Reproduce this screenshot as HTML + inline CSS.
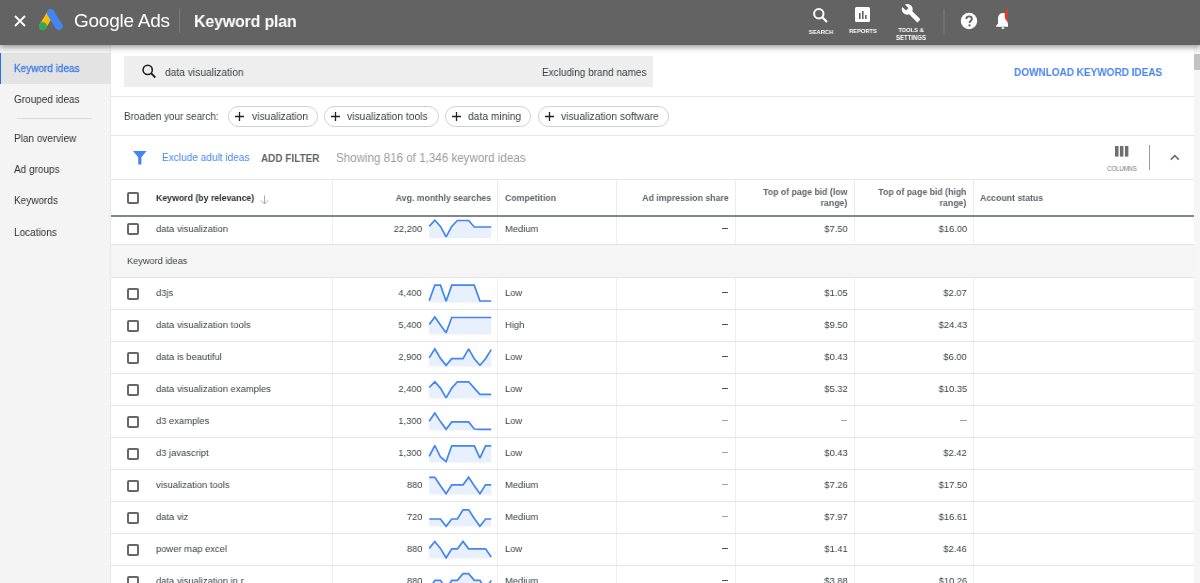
<!DOCTYPE html><html><head><meta charset="utf-8"><title>Keyword plan</title><style>
*{margin:0;padding:0;box-sizing:border-box}
html,body{width:1200px;height:583px;overflow:hidden;background:#fff}
body{position:relative;font-family:"Liberation Sans", sans-serif}
.t{position:absolute;height:20px;line-height:20px;white-space:nowrap;will-change:transform}
.a{position:absolute}
.cb{position:absolute;width:12px;height:12px;border:2px solid #676767;border-radius:2px}
</style></head><body><div class="a" style="left:0;top:0;width:1200px;height:45px;background:#636363;box-shadow:0 2px 6px rgba(0,0,0,.42);z-index:5"></div>
<svg class="a" style="left:13px;top:14px;z-index:6" width="14" height="14" viewBox="0 0 14 14"><path d="M2 2L12 12M12 2L2 12" stroke="#fff" stroke-width="1.8"/></svg>
<svg class="a" style="left:38px;top:9px;z-index:6" width="26" height="24" viewBox="0 0 26 24">
<path d="M12.6 4.1 L4.9 17.25" stroke="#fbbc04" stroke-width="7.3" stroke-linecap="round"/>
<path d="M12.6 4.1 L20.85 17.25" stroke="#4285f4" stroke-width="7.6" stroke-linecap="round"/>
<circle cx="4.9" cy="17.25" r="3.9" fill="#34a853"/>
</svg>
<div class="t" style="left:74px;top:11px;font-size:19px;font-weight:400;color:#fff;letter-spacing:-0.25px;z-index:6;">Google Ads</div>
<div class="a" style="left:179px;top:9px;width:1px;height:24px;background:#7a7a7a;z-index:6"></div>
<div class="t" style="left:194px;top:12.3px;font-size:16.96px;font-weight:700;color:#fff;letter-spacing:-0.2px;z-index:6;transform:scaleX(0.9434);transform-origin:left center;">Keyword plan</div>
<svg class="a" style="left:812px;top:7px;z-index:6" width="17" height="16" viewBox="0 0 17 16"><circle cx="6.8" cy="6.8" r="4.7" fill="none" stroke="#fff" stroke-width="2"/><path d="M10.3 10.3L15 15" stroke="#fff" stroke-width="2.2"/></svg>
<div class="t" style="left:621px;width:400px;text-align:center;top:21.5px;font-size:6.15px;font-weight:700;color:#fff;letter-spacing:0px;z-index:6;transform:scaleX(0.9434);transform-origin:center center;">SEARCH</div>
<svg class="a" style="left:855px;top:7px;z-index:6" width="15" height="15" viewBox="0 0 15 15"><rect x="0" y="0" width="15" height="15" rx="1.5" fill="#fff"/><rect x="4" y="6" width="1.6" height="6" fill="#636363"/><rect x="7" y="4" width="1.6" height="8" fill="#636363"/><rect x="10" y="8" width="1.6" height="4" fill="#636363"/></svg>
<div class="t" style="left:662.5px;width:400px;text-align:center;top:21px;font-size:6.15px;font-weight:700;color:#fff;letter-spacing:0px;z-index:6;transform:scaleX(0.9434);transform-origin:center center;">REPORTS</div>
<svg class="a" style="left:901px;top:3px;z-index:6" width="20" height="20" viewBox="0 0 24 24"><path fill="#fff" d="M22.7 19l-9.1-9.1c.9-2.3.4-5-1.5-6.9-2-2-5-2.4-7.4-1.3L9 6 6 9 1.6 4.7C.4 7.1.9 10.1 2.9 12.1c1.9 1.9 4.6 2.4 6.9 1.5l9.1 9.1c.4.4 1 .4 1.4 0l2.3-2.3c.5-.4.5-1.1.1-1.4z"/></svg>
<div class="t" style="left:711px;width:400px;text-align:center;top:20px;font-size:6.15px;font-weight:700;color:#fff;letter-spacing:0px;z-index:6;transform:scaleX(0.9434);transform-origin:center center;">TOOLS &amp;</div>
<div class="t" style="left:711px;width:400px;text-align:center;top:27.6px;font-size:6.36px;font-weight:700;color:#fff;letter-spacing:0px;z-index:6;transform:scaleX(0.9434);transform-origin:center center;">SETTINGS</div>
<div class="a" style="left:942.5px;top:9px;width:2px;height:25px;background:#707070;z-index:6"></div>
<svg class="a" style="left:960.2px;top:12.4px;z-index:6" width="18" height="18" viewBox="0 0 18 18"><circle cx="9" cy="9" r="8.2" fill="#fff"/><path d="M6.3 7.1c0-1.6 1.2-2.7 2.8-2.7s2.8 1 2.8 2.5c0 1.9-2.3 1.9-2.3 4" fill="none" stroke="#636363" stroke-width="1.9"/><rect x="8.5" y="12.4" width="2" height="2" fill="#636363"/></svg>
<svg class="a" style="left:994px;top:8px;z-index:6" width="14.4" height="24" viewBox="0 0 14.4 24">
<path fill="#fff" d="M8.9 5.0C5.8 5.0 4 7.6 4 10.8V15.8L2.2 17.6V18.8H15.6V17.6L13.8 15.8V10.8C13.8 7.6 12 5.0 8.9 5.0Z"/>
<rect x="7.6" y="19.3" width="2.6" height="1.7" rx=".8" fill="#fff"/>
<circle cx="19.6" cy="7.4" r="9" fill="#d23f31"/>
</svg>
<div class="a" style="left:0;top:45px;width:111px;height:538px;background:#f4f4f4;border-right:1px solid #e9e9e9"></div>
<div class="a" style="left:0;top:53px;width:111px;height:31px;background:#e3e3e3"></div>
<div class="a" style="left:0;top:53px;width:1.2px;height:31px;background:#1a73e8"></div>
<div class="t" style="left:14px;top:58.400000000000006px;font-size:10.6px;font-weight:400;color:#3b7ae9;letter-spacing:0px;-webkit-text-stroke:0.3px #3b7ae9;transform:scaleX(0.9434);transform-origin:left center;">Keyword ideas</div>
<div class="t" style="left:14px;top:89.4px;font-size:10.6px;font-weight:400;color:#303134;letter-spacing:0px;transform:scaleX(0.9434);transform-origin:left center;">Grouped ideas</div>
<div class="a" style="left:17px;top:118px;width:75px;height:1px;background:#dadada"></div>
<div class="t" style="left:14px;top:127.6px;font-size:10.6px;font-weight:400;color:#303134;letter-spacing:0px;transform:scaleX(0.9434);transform-origin:left center;">Plan overview</div>
<div class="t" style="left:14px;top:159.1px;font-size:10.6px;font-weight:400;color:#303134;letter-spacing:0px;transform:scaleX(0.9434);transform-origin:left center;">Ad groups</div>
<div class="t" style="left:14px;top:190px;font-size:10.6px;font-weight:400;color:#303134;letter-spacing:0px;transform:scaleX(0.9434);transform-origin:left center;">Keywords</div>
<div class="t" style="left:14px;top:221.7px;font-size:10.6px;font-weight:400;color:#303134;letter-spacing:0px;transform:scaleX(0.9434);transform-origin:left center;">Locations</div>
<div class="a" style="left:1194px;top:45px;width:6px;height:538px;background:#f6f6f6"></div>
<div class="a" style="left:1194px;top:54px;width:6px;height:16px;background:#c2c2c2"></div>
<div class="a" style="left:124px;top:55.5px;width:529px;height:31.5px;background:#eeeeee"></div>
<svg class="a" style="left:141px;top:63px" width="16" height="16" viewBox="0 0 16 16"><circle cx="6.7" cy="6.9" r="4.6" fill="none" stroke="#202124" stroke-width="1.6"/><path d="M10 10.2L14.3 14.5" stroke="#202124" stroke-width="1.9"/></svg>
<div class="t" style="left:165px;top:62px;font-size:10.87px;font-weight:400;color:#3c4043;letter-spacing:0px;transform:scaleX(0.9434);transform-origin:left center;">data visualization</div>
<div class="t" style="left:541.5px;top:62px;font-size:10.6px;font-weight:400;color:#3c4043;letter-spacing:0px;transform:scaleX(0.9434);transform-origin:left center;">Excluding brand names</div>
<div class="t" style="left:1014px;top:61.8px;font-size:11.4px;font-weight:700;color:#4a86f0;letter-spacing:-0.1px;transform:scaleX(0.888);transform-origin:left center;">DOWNLOAD KEYWORD IDEAS</div>
<div class="a" style="left:111px;top:96px;width:1083px;height:1px;background:#e6e6e6"></div>
<div class="t" style="left:124px;top:106.6px;font-size:10.49px;font-weight:400;color:#3c4043;letter-spacing:0px;transform:scaleX(0.9434);transform-origin:left center;">Broaden your search:</div>
<div class="a" style="left:228.4px;top:105.5px;width:89.20000000000002px;height:21px;border:1px solid #d0d0d0;border-radius:10.5px"></div>
<svg class="a" style="left:235.4px;top:111.5px" width="9" height="9" viewBox="0 0 9 9"><path d="M4.5 0V9M0 4.5H9" stroke="#202124" stroke-width="1.3"/></svg>
<div class="t" style="left:251.6px;top:105.8px;font-size:10.92px;font-weight:400;color:#3c4043;letter-spacing:0px;transform:scaleX(0.9434);transform-origin:left center;">visualization</div>
<div class="a" style="left:323.9px;top:105.5px;width:115.0px;height:21px;border:1px solid #d0d0d0;border-radius:10.5px"></div>
<svg class="a" style="left:330.9px;top:111.5px" width="9" height="9" viewBox="0 0 9 9"><path d="M4.5 0V9M0 4.5H9" stroke="#202124" stroke-width="1.3"/></svg>
<div class="t" style="left:347.09999999999997px;top:105.8px;font-size:10.92px;font-weight:400;color:#3c4043;letter-spacing:0px;transform:scaleX(0.9434);transform-origin:left center;">visualization tools</div>
<div class="a" style="left:445px;top:105.5px;width:86.39999999999998px;height:21px;border:1px solid #d0d0d0;border-radius:10.5px"></div>
<svg class="a" style="left:452px;top:111.5px" width="9" height="9" viewBox="0 0 9 9"><path d="M4.5 0V9M0 4.5H9" stroke="#202124" stroke-width="1.3"/></svg>
<div class="t" style="left:468.2px;top:105.8px;font-size:10.92px;font-weight:400;color:#3c4043;letter-spacing:0px;transform:scaleX(0.9434);transform-origin:left center;">data mining</div>
<div class="a" style="left:538.2px;top:105.5px;width:130.39999999999998px;height:21px;border:1px solid #d0d0d0;border-radius:10.5px"></div>
<svg class="a" style="left:545.2px;top:111.5px" width="9" height="9" viewBox="0 0 9 9"><path d="M4.5 0V9M0 4.5H9" stroke="#202124" stroke-width="1.3"/></svg>
<div class="t" style="left:561.4000000000001px;top:105.8px;font-size:10.92px;font-weight:400;color:#3c4043;letter-spacing:0px;transform:scaleX(0.9434);transform-origin:left center;">visualization software</div>
<div class="a" style="left:111px;top:135px;width:1083px;height:1px;background:#e6e6e6"></div>
<svg class="a" style="left:133px;top:150.5px" width="14" height="14" viewBox="0 0 14 14"><path d="M0 0H13.6L8.4 6.2V13.5H5.2V6.2Z" fill="#4285f4"/></svg>
<div class="t" style="left:161.5px;top:147.4px;font-size:10.71px;font-weight:400;color:#4a86f0;letter-spacing:0px;transform:scaleX(0.9434);transform-origin:left center;">Exclude adult ideas</div>
<div class="t" style="left:261.3px;top:147.9px;font-size:10.9px;font-weight:700;color:#5f6266;letter-spacing:0px;transform:scaleX(0.915);transform-origin:left center;">ADD FILTER</div>
<div class="t" style="left:335.6px;top:147.6px;font-size:12.3px;font-weight:400;color:#9a9a9a;letter-spacing:0px;transform:scaleX(0.9434);transform-origin:left center;">Showing 816 of 1,346 keyword ideas</div>
<svg class="a" style="left:1115.3px;top:146.2px" width="13.4" height="10.6" viewBox="0 0 13.4 10.6"><rect x="0" y="0" width="3.5" height="10.6" fill="#6e6e6e"/><rect x="4.9" y="0" width="3.5" height="10.6" fill="#6e6e6e"/><rect x="9.9" y="0" width="3.5" height="10.6" fill="#6e6e6e"/></svg>
<div class="t" style="left:921.5px;width:400px;text-align:center;top:158.6px;font-size:6.47px;font-weight:400;color:#777;letter-spacing:-0.1px;transform:scaleX(0.9434);transform-origin:center center;">COLUMNS</div>
<div class="a" style="left:1149px;top:145px;width:1px;height:25px;background:#9a9a9a"></div>
<svg class="a" style="left:1169px;top:152px" width="12" height="10" viewBox="0 0 12 10"><path d="M1.8 7.6L5.8 3.6L9.8 7.6" fill="none" stroke="#6a6a6a" stroke-width="1.5"/></svg>
<div class="a" style="left:111px;top:179px;width:1083px;height:1px;background:#e6e6e6"></div>
<div class="a" style="left:332px;top:180px;width:1px;height:35px;background:#ececec"></div>
<div class="a" style="left:497px;top:180px;width:1px;height:35px;background:#ececec"></div>
<div class="a" style="left:616px;top:180px;width:1px;height:35px;background:#ececec"></div>
<div class="a" style="left:735px;top:180px;width:1px;height:35px;background:#ececec"></div>
<div class="a" style="left:854px;top:180px;width:1px;height:35px;background:#ececec"></div>
<div class="a" style="left:973px;top:180px;width:1px;height:35px;background:#ececec"></div>
<div class="a" style="left:111px;top:214.6px;width:1083px;height:2.2px;background:#80868b"></div>
<div class="cb" style="left:127px;top:191.5px"></div>
<div class="t" style="left:155.7px;top:187.5px;font-size:9.28px;font-weight:700;color:#2a2c2f;letter-spacing:0px;transform:scaleX(0.9434);transform-origin:left center;">Keyword (by relevance)</div>
<svg class="a" style="left:260px;top:194.5px" width="9" height="10" viewBox="0 0 9 10"><path d="M4.5 0.5V9M1 5.5L4.5 9L8 5.5" fill="none" stroke="#a9a9a9" stroke-width="1"/></svg>
<div class="t" style="right:709.25px;top:187.5px;font-size:9.28px;font-weight:700;color:#5f6368;letter-spacing:0px;transform:scaleX(0.9434);transform-origin:right center;">Avg. monthly searches</div>
<div class="t" style="left:504.5px;top:187.5px;font-size:9.28px;font-weight:700;color:#5f6368;letter-spacing:0px;transform:scaleX(0.9434);transform-origin:left center;">Competition</div>
<div class="t" style="right:471.70000000000005px;top:187.5px;font-size:9.28px;font-weight:700;color:#5f6368;letter-spacing:0px;transform:scaleX(0.9434);transform-origin:right center;">Ad impression share</div>
<div class="t" style="right:352.70000000000005px;top:181.7px;font-size:9.28px;font-weight:700;color:#5f6368;letter-spacing:0px;transform:scaleX(0.9434);transform-origin:right center;">Top of page bid (low</div>
<div class="t" style="right:352.70000000000005px;top:193.3px;font-size:9.28px;font-weight:700;color:#5f6368;letter-spacing:0px;transform:scaleX(0.9434);transform-origin:right center;">range)</div>
<div class="t" style="right:233.29999999999995px;top:181.7px;font-size:9.28px;font-weight:700;color:#5f6368;letter-spacing:0px;transform:scaleX(0.9434);transform-origin:right center;">Top of page bid (high</div>
<div class="t" style="right:233.29999999999995px;top:193.3px;font-size:9.28px;font-weight:700;color:#5f6368;letter-spacing:0px;transform:scaleX(0.9434);transform-origin:right center;">range)</div>
<div class="t" style="left:980px;top:187.5px;font-size:9.28px;font-weight:700;color:#5f6368;letter-spacing:0px;transform:scaleX(0.9434);transform-origin:left center;">Account status</div>
<div class="a" style="left:332px;top:217px;width:1px;height:27px;background:#efeff1"></div>
<div class="a" style="left:497px;top:217px;width:1px;height:27px;background:#efeff1"></div>
<div class="a" style="left:616px;top:217px;width:1px;height:27px;background:#efeff1"></div>
<div class="a" style="left:735px;top:217px;width:1px;height:27px;background:#efeff1"></div>
<div class="a" style="left:854px;top:217px;width:1px;height:27px;background:#efeff1"></div>
<div class="a" style="left:973px;top:217px;width:1px;height:27px;background:#efeff1"></div>
<div class="a" style="left:111px;top:244px;width:1083px;height:1px;background:#e2e4e7"></div>
<div class="cb" style="left:127px;top:222.7px"></div>
<div class="t" style="left:155.7px;top:218.7px;font-size:9.96px;font-weight:400;color:#3c4043;letter-spacing:0px;transform:scaleX(0.9434);transform-origin:left center;">data visualization</div>
<div class="t" style="right:778px;top:218.7px;font-size:9.86px;font-weight:400;color:#3c4043;letter-spacing:0px;transform:scaleX(0.9434);transform-origin:right center;">22,200</div>
<div class="t" style="left:504.5px;top:218.7px;font-size:9.96px;font-weight:400;color:#3c4043;letter-spacing:0px;transform:scaleX(0.9434);transform-origin:left center;">Medium</div>
<div class="a" style="left:722.1px;top:227.6px;width:6.4px;height:1.3px;background:#505050"></div>
<div class="t" style="right:352.70000000000005px;top:218.7px;font-size:9.86px;font-weight:400;color:#3c4043;letter-spacing:0px;transform:scaleX(0.9434);transform-origin:right center;">$7.50</div>
<div class="t" style="right:233.29999999999995px;top:218.7px;font-size:9.86px;font-weight:400;color:#3c4043;letter-spacing:0px;transform:scaleX(0.9434);transform-origin:right center;">$16.00</div>
<svg class="a" style="left:428px;top:215px" width="66" height="31" viewBox="0 0 66 31"><polygon points="1.20,23.00 1.20,11.40 6.84,5.25 12.47,11.40 18.11,21.90 23.75,11.40 29.38,5.50 35.02,5.50 40.65,5.50 46.29,12.00 51.93,12.00 57.56,12.00 63.20,12.00 63.20,23.00" fill="#e8effd"/><polyline points="1.20,11.40 6.84,5.25 12.47,11.40 18.11,21.90 23.75,11.40 29.38,5.50 35.02,5.50 40.65,5.50 46.29,12.00 51.93,12.00 57.56,12.00 63.20,12.00" fill="none" stroke="#4285f4" stroke-width="1.7" stroke-linejoin="miter" stroke-miterlimit="2"/></svg>
<div class="a" style="left:111px;top:245px;width:1083px;height:32px;background:#f5f5f5"></div>
<div class="a" style="left:111px;top:277px;width:1083px;height:1px;background:#e2e4e7"></div>
<div class="t" style="left:127px;top:250.5px;font-size:9.75px;font-weight:400;color:#3c4043;letter-spacing:0px;transform:scaleX(0.9434);transform-origin:left center;">Keyword ideas</div>
<div class="a" style="left:332px;top:278px;width:1px;height:31px;background:#efeff1"></div>
<div class="a" style="left:497px;top:278px;width:1px;height:31px;background:#efeff1"></div>
<div class="a" style="left:616px;top:278px;width:1px;height:31px;background:#efeff1"></div>
<div class="a" style="left:735px;top:278px;width:1px;height:31px;background:#efeff1"></div>
<div class="a" style="left:854px;top:278px;width:1px;height:31px;background:#efeff1"></div>
<div class="a" style="left:973px;top:278px;width:1px;height:31px;background:#efeff1"></div>
<div class="a" style="left:111px;top:309px;width:1083px;height:1px;background:#e2e4e7"></div>
<div class="cb" style="left:127px;top:287.5px"></div>
<div class="t" style="left:155.7px;top:283.1px;font-size:9.96px;font-weight:400;color:#3c4043;letter-spacing:0px;transform:scaleX(0.9434);transform-origin:left center;">d3js</div>
<div class="t" style="right:778px;top:283.1px;font-size:9.86px;font-weight:400;color:#3c4043;letter-spacing:0px;transform:scaleX(0.9434);transform-origin:right center;">4,400</div>
<div class="t" style="left:504.5px;top:283.1px;font-size:9.96px;font-weight:400;color:#3c4043;letter-spacing:0px;transform:scaleX(0.9434);transform-origin:left center;">Low</div>
<div class="a" style="left:722.1px;top:292.0px;width:6.4px;height:1.3px;background:#505050"></div>
<div class="t" style="right:352.70000000000005px;top:283.1px;font-size:9.86px;font-weight:400;color:#3c4043;letter-spacing:0px;transform:scaleX(0.9434);transform-origin:right center;">$1.05</div>
<div class="t" style="right:233.29999999999995px;top:283.1px;font-size:9.86px;font-weight:400;color:#3c4043;letter-spacing:0px;transform:scaleX(0.9434);transform-origin:right center;">$2.07</div>
<svg class="a" style="left:428px;top:276px" width="66" height="35" viewBox="0 0 66 35"><polygon points="1.20,26.60 1.20,24.70 6.84,9.10 12.47,9.10 18.11,25.30 23.75,9.10 29.38,9.10 35.02,9.10 40.65,9.10 46.29,9.10 51.93,25.00 57.56,25.00 63.20,25.00 63.20,26.60" fill="#e8effd"/><polyline points="1.20,24.70 6.84,9.10 12.47,9.10 18.11,25.30 23.75,9.10 29.38,9.10 35.02,9.10 40.65,9.10 46.29,9.10 51.93,25.00 57.56,25.00 63.20,25.00" fill="none" stroke="#4285f4" stroke-width="1.7" stroke-linejoin="miter" stroke-miterlimit="2"/></svg>
<div class="a" style="left:332px;top:310px;width:1px;height:31px;background:#efeff1"></div>
<div class="a" style="left:497px;top:310px;width:1px;height:31px;background:#efeff1"></div>
<div class="a" style="left:616px;top:310px;width:1px;height:31px;background:#efeff1"></div>
<div class="a" style="left:735px;top:310px;width:1px;height:31px;background:#efeff1"></div>
<div class="a" style="left:854px;top:310px;width:1px;height:31px;background:#efeff1"></div>
<div class="a" style="left:973px;top:310px;width:1px;height:31px;background:#efeff1"></div>
<div class="a" style="left:111px;top:341px;width:1083px;height:1px;background:#e2e4e7"></div>
<div class="cb" style="left:127px;top:319.5px"></div>
<div class="t" style="left:155.7px;top:315.1px;font-size:9.96px;font-weight:400;color:#3c4043;letter-spacing:0px;transform:scaleX(0.9434);transform-origin:left center;">data visualization tools</div>
<div class="t" style="right:778px;top:315.1px;font-size:9.86px;font-weight:400;color:#3c4043;letter-spacing:0px;transform:scaleX(0.9434);transform-origin:right center;">5,400</div>
<div class="t" style="left:504.5px;top:315.1px;font-size:9.96px;font-weight:400;color:#3c4043;letter-spacing:0px;transform:scaleX(0.9434);transform-origin:left center;">High</div>
<div class="a" style="left:722.1px;top:324.0px;width:6.4px;height:1.3px;background:#505050"></div>
<div class="t" style="right:352.70000000000005px;top:315.1px;font-size:9.86px;font-weight:400;color:#3c4043;letter-spacing:0px;transform:scaleX(0.9434);transform-origin:right center;">$9.50</div>
<div class="t" style="right:233.29999999999995px;top:315.1px;font-size:9.86px;font-weight:400;color:#3c4043;letter-spacing:0px;transform:scaleX(0.9434);transform-origin:right center;">$24.43</div>
<svg class="a" style="left:428px;top:308px" width="66" height="35" viewBox="0 0 66 35"><polygon points="1.20,26.60 1.20,16.60 6.84,8.90 12.47,17.10 18.11,24.80 23.75,9.50 29.38,9.50 35.02,9.50 40.65,9.50 46.29,9.50 51.93,9.50 57.56,9.50 63.20,9.50 63.20,26.60" fill="#e8effd"/><polyline points="1.20,16.60 6.84,8.90 12.47,17.10 18.11,24.80 23.75,9.50 29.38,9.50 35.02,9.50 40.65,9.50 46.29,9.50 51.93,9.50 57.56,9.50 63.20,9.50" fill="none" stroke="#4285f4" stroke-width="1.7" stroke-linejoin="miter" stroke-miterlimit="2"/></svg>
<div class="a" style="left:332px;top:342px;width:1px;height:31px;background:#efeff1"></div>
<div class="a" style="left:497px;top:342px;width:1px;height:31px;background:#efeff1"></div>
<div class="a" style="left:616px;top:342px;width:1px;height:31px;background:#efeff1"></div>
<div class="a" style="left:735px;top:342px;width:1px;height:31px;background:#efeff1"></div>
<div class="a" style="left:854px;top:342px;width:1px;height:31px;background:#efeff1"></div>
<div class="a" style="left:973px;top:342px;width:1px;height:31px;background:#efeff1"></div>
<div class="a" style="left:111px;top:373px;width:1083px;height:1px;background:#e2e4e7"></div>
<div class="cb" style="left:127px;top:351.5px"></div>
<div class="t" style="left:155.7px;top:347.1px;font-size:9.96px;font-weight:400;color:#3c4043;letter-spacing:0px;transform:scaleX(0.9434);transform-origin:left center;">data is beautiful</div>
<div class="t" style="right:778px;top:347.1px;font-size:9.86px;font-weight:400;color:#3c4043;letter-spacing:0px;transform:scaleX(0.9434);transform-origin:right center;">2,900</div>
<div class="t" style="left:504.5px;top:347.1px;font-size:9.96px;font-weight:400;color:#3c4043;letter-spacing:0px;transform:scaleX(0.9434);transform-origin:left center;">Low</div>
<div class="a" style="left:722.1px;top:356.0px;width:6.4px;height:1.3px;background:#505050"></div>
<div class="t" style="right:352.70000000000005px;top:347.1px;font-size:9.86px;font-weight:400;color:#3c4043;letter-spacing:0px;transform:scaleX(0.9434);transform-origin:right center;">$0.43</div>
<div class="t" style="right:233.29999999999995px;top:347.1px;font-size:9.86px;font-weight:400;color:#3c4043;letter-spacing:0px;transform:scaleX(0.9434);transform-origin:right center;">$6.00</div>
<svg class="a" style="left:428px;top:340px" width="66" height="35" viewBox="0 0 66 35"><polygon points="1.20,26.60 1.20,17.90 6.84,8.90 12.47,18.40 18.11,25.30 23.75,18.70 29.38,18.70 35.02,18.70 40.65,8.90 46.29,18.70 51.93,25.30 57.56,18.70 63.20,9.60 63.20,26.60" fill="#e8effd"/><polyline points="1.20,17.90 6.84,8.90 12.47,18.40 18.11,25.30 23.75,18.70 29.38,18.70 35.02,18.70 40.65,8.90 46.29,18.70 51.93,25.30 57.56,18.70 63.20,9.60" fill="none" stroke="#4285f4" stroke-width="1.7" stroke-linejoin="miter" stroke-miterlimit="2"/></svg>
<div class="a" style="left:332px;top:374px;width:1px;height:31px;background:#efeff1"></div>
<div class="a" style="left:497px;top:374px;width:1px;height:31px;background:#efeff1"></div>
<div class="a" style="left:616px;top:374px;width:1px;height:31px;background:#efeff1"></div>
<div class="a" style="left:735px;top:374px;width:1px;height:31px;background:#efeff1"></div>
<div class="a" style="left:854px;top:374px;width:1px;height:31px;background:#efeff1"></div>
<div class="a" style="left:973px;top:374px;width:1px;height:31px;background:#efeff1"></div>
<div class="a" style="left:111px;top:405px;width:1083px;height:1px;background:#e2e4e7"></div>
<div class="cb" style="left:127px;top:383.5px"></div>
<div class="t" style="left:155.7px;top:379.1px;font-size:9.96px;font-weight:400;color:#3c4043;letter-spacing:0px;transform:scaleX(0.9434);transform-origin:left center;">data visualization examples</div>
<div class="t" style="right:778px;top:379.1px;font-size:9.86px;font-weight:400;color:#3c4043;letter-spacing:0px;transform:scaleX(0.9434);transform-origin:right center;">2,400</div>
<div class="t" style="left:504.5px;top:379.1px;font-size:9.96px;font-weight:400;color:#3c4043;letter-spacing:0px;transform:scaleX(0.9434);transform-origin:left center;">Low</div>
<div class="a" style="left:722.1px;top:388.0px;width:6.4px;height:1.3px;background:#505050"></div>
<div class="t" style="right:352.70000000000005px;top:379.1px;font-size:9.86px;font-weight:400;color:#3c4043;letter-spacing:0px;transform:scaleX(0.9434);transform-origin:right center;">$5.32</div>
<div class="t" style="right:233.29999999999995px;top:379.1px;font-size:9.86px;font-weight:400;color:#3c4043;letter-spacing:0px;transform:scaleX(0.9434);transform-origin:right center;">$10.35</div>
<svg class="a" style="left:428px;top:372px" width="66" height="35" viewBox="0 0 66 35"><polygon points="1.20,26.60 1.20,15.50 6.84,9.80 12.47,16.10 18.11,25.90 23.75,16.10 29.38,9.80 35.02,9.80 40.65,9.80 46.29,16.10 51.93,22.30 57.56,22.30 63.20,22.30 63.20,26.60" fill="#e8effd"/><polyline points="1.20,15.50 6.84,9.80 12.47,16.10 18.11,25.90 23.75,16.10 29.38,9.80 35.02,9.80 40.65,9.80 46.29,16.10 51.93,22.30 57.56,22.30 63.20,22.30" fill="none" stroke="#4285f4" stroke-width="1.7" stroke-linejoin="miter" stroke-miterlimit="2"/></svg>
<div class="a" style="left:332px;top:406px;width:1px;height:31px;background:#efeff1"></div>
<div class="a" style="left:497px;top:406px;width:1px;height:31px;background:#efeff1"></div>
<div class="a" style="left:616px;top:406px;width:1px;height:31px;background:#efeff1"></div>
<div class="a" style="left:735px;top:406px;width:1px;height:31px;background:#efeff1"></div>
<div class="a" style="left:854px;top:406px;width:1px;height:31px;background:#efeff1"></div>
<div class="a" style="left:973px;top:406px;width:1px;height:31px;background:#efeff1"></div>
<div class="a" style="left:111px;top:437px;width:1083px;height:1px;background:#e2e4e7"></div>
<div class="cb" style="left:127px;top:415.5px"></div>
<div class="t" style="left:155.7px;top:411.1px;font-size:9.96px;font-weight:400;color:#3c4043;letter-spacing:0px;transform:scaleX(0.9434);transform-origin:left center;">d3 examples</div>
<div class="t" style="right:778px;top:411.1px;font-size:9.86px;font-weight:400;color:#3c4043;letter-spacing:0px;transform:scaleX(0.9434);transform-origin:right center;">1,300</div>
<div class="t" style="left:504.5px;top:411.1px;font-size:9.96px;font-weight:400;color:#3c4043;letter-spacing:0px;transform:scaleX(0.9434);transform-origin:left center;">Low</div>
<div class="a" style="left:722.1px;top:420.0px;width:6.4px;height:1.3px;background:#a3a3a3"></div>
<div class="a" style="left:840.9px;top:420.0px;width:6.4px;height:1.3px;background:#a3a3a3"></div>
<div class="a" style="left:960.3000000000001px;top:420.0px;width:6.4px;height:1.3px;background:#a3a3a3"></div>
<svg class="a" style="left:428px;top:404px" width="66" height="35" viewBox="0 0 66 35"><polygon points="1.20,26.60 1.20,17.30 6.84,9.10 12.47,17.60 18.11,25.30 23.75,17.90 29.38,17.90 35.02,17.90 40.65,17.90 46.29,25.00 51.93,25.30 57.56,25.30 63.20,25.30 63.20,26.60" fill="#e8effd"/><polyline points="1.20,17.30 6.84,9.10 12.47,17.60 18.11,25.30 23.75,17.90 29.38,17.90 35.02,17.90 40.65,17.90 46.29,25.00 51.93,25.30 57.56,25.30 63.20,25.30" fill="none" stroke="#4285f4" stroke-width="1.7" stroke-linejoin="miter" stroke-miterlimit="2"/></svg>
<div class="a" style="left:332px;top:438px;width:1px;height:31px;background:#efeff1"></div>
<div class="a" style="left:497px;top:438px;width:1px;height:31px;background:#efeff1"></div>
<div class="a" style="left:616px;top:438px;width:1px;height:31px;background:#efeff1"></div>
<div class="a" style="left:735px;top:438px;width:1px;height:31px;background:#efeff1"></div>
<div class="a" style="left:854px;top:438px;width:1px;height:31px;background:#efeff1"></div>
<div class="a" style="left:973px;top:438px;width:1px;height:31px;background:#efeff1"></div>
<div class="a" style="left:111px;top:469px;width:1083px;height:1px;background:#e2e4e7"></div>
<div class="cb" style="left:127px;top:447.5px"></div>
<div class="t" style="left:155.7px;top:443.1px;font-size:9.96px;font-weight:400;color:#3c4043;letter-spacing:0px;transform:scaleX(0.9434);transform-origin:left center;">d3 javascript</div>
<div class="t" style="right:778px;top:443.1px;font-size:9.86px;font-weight:400;color:#3c4043;letter-spacing:0px;transform:scaleX(0.9434);transform-origin:right center;">1,300</div>
<div class="t" style="left:504.5px;top:443.1px;font-size:9.96px;font-weight:400;color:#3c4043;letter-spacing:0px;transform:scaleX(0.9434);transform-origin:left center;">Low</div>
<div class="a" style="left:722.1px;top:452.0px;width:6.4px;height:1.3px;background:#a3a3a3"></div>
<div class="t" style="right:352.70000000000005px;top:443.1px;font-size:9.86px;font-weight:400;color:#3c4043;letter-spacing:0px;transform:scaleX(0.9434);transform-origin:right center;">$0.43</div>
<div class="t" style="right:233.29999999999995px;top:443.1px;font-size:9.86px;font-weight:400;color:#3c4043;letter-spacing:0px;transform:scaleX(0.9434);transform-origin:right center;">$2.42</div>
<svg class="a" style="left:428px;top:436px" width="66" height="35" viewBox="0 0 66 35"><polygon points="1.20,26.60 1.20,20.40 6.84,9.50 12.47,21.00 18.11,25.60 23.75,9.80 29.38,9.80 35.02,9.80 40.65,9.80 46.29,9.80 51.93,22.10 57.56,9.80 63.20,9.80 63.20,26.60" fill="#e8effd"/><polyline points="1.20,20.40 6.84,9.50 12.47,21.00 18.11,25.60 23.75,9.80 29.38,9.80 35.02,9.80 40.65,9.80 46.29,9.80 51.93,22.10 57.56,9.80 63.20,9.80" fill="none" stroke="#4285f4" stroke-width="1.7" stroke-linejoin="miter" stroke-miterlimit="2"/></svg>
<div class="a" style="left:332px;top:470px;width:1px;height:31px;background:#efeff1"></div>
<div class="a" style="left:497px;top:470px;width:1px;height:31px;background:#efeff1"></div>
<div class="a" style="left:616px;top:470px;width:1px;height:31px;background:#efeff1"></div>
<div class="a" style="left:735px;top:470px;width:1px;height:31px;background:#efeff1"></div>
<div class="a" style="left:854px;top:470px;width:1px;height:31px;background:#efeff1"></div>
<div class="a" style="left:973px;top:470px;width:1px;height:31px;background:#efeff1"></div>
<div class="a" style="left:111px;top:501px;width:1083px;height:1px;background:#e2e4e7"></div>
<div class="cb" style="left:127px;top:479.5px"></div>
<div class="t" style="left:155.7px;top:475.1px;font-size:9.96px;font-weight:400;color:#3c4043;letter-spacing:0px;transform:scaleX(0.9434);transform-origin:left center;">visualization tools</div>
<div class="t" style="right:778px;top:475.1px;font-size:9.86px;font-weight:400;color:#3c4043;letter-spacing:0px;transform:scaleX(0.9434);transform-origin:right center;">880</div>
<div class="t" style="left:504.5px;top:475.1px;font-size:9.96px;font-weight:400;color:#3c4043;letter-spacing:0px;transform:scaleX(0.9434);transform-origin:left center;">Medium</div>
<div class="a" style="left:722.1px;top:484.0px;width:6.4px;height:1.3px;background:#a3a3a3"></div>
<div class="t" style="right:352.70000000000005px;top:475.1px;font-size:9.86px;font-weight:400;color:#3c4043;letter-spacing:0px;transform:scaleX(0.9434);transform-origin:right center;">$7.26</div>
<div class="t" style="right:233.29999999999995px;top:475.1px;font-size:9.86px;font-weight:400;color:#3c4043;letter-spacing:0px;transform:scaleX(0.9434);transform-origin:right center;">$17.50</div>
<svg class="a" style="left:428px;top:468px" width="66" height="35" viewBox="0 0 66 35"><polygon points="1.20,26.60 1.20,9.30 6.84,9.30 12.47,17.80 18.11,25.80 23.75,16.80 29.38,16.80 35.02,16.80 40.65,9.30 46.29,17.80 51.93,25.80 57.56,16.80 63.20,16.80 63.20,26.60" fill="#e8effd"/><polyline points="1.20,9.30 6.84,9.30 12.47,17.80 18.11,25.80 23.75,16.80 29.38,16.80 35.02,16.80 40.65,9.30 46.29,17.80 51.93,25.80 57.56,16.80 63.20,16.80" fill="none" stroke="#4285f4" stroke-width="1.7" stroke-linejoin="miter" stroke-miterlimit="2"/></svg>
<div class="a" style="left:332px;top:502px;width:1px;height:31px;background:#efeff1"></div>
<div class="a" style="left:497px;top:502px;width:1px;height:31px;background:#efeff1"></div>
<div class="a" style="left:616px;top:502px;width:1px;height:31px;background:#efeff1"></div>
<div class="a" style="left:735px;top:502px;width:1px;height:31px;background:#efeff1"></div>
<div class="a" style="left:854px;top:502px;width:1px;height:31px;background:#efeff1"></div>
<div class="a" style="left:973px;top:502px;width:1px;height:31px;background:#efeff1"></div>
<div class="a" style="left:111px;top:533px;width:1083px;height:1px;background:#e2e4e7"></div>
<div class="cb" style="left:127px;top:511.5px"></div>
<div class="t" style="left:155.7px;top:507.1px;font-size:9.96px;font-weight:400;color:#3c4043;letter-spacing:0px;transform:scaleX(0.9434);transform-origin:left center;">data viz</div>
<div class="t" style="right:778px;top:507.1px;font-size:9.86px;font-weight:400;color:#3c4043;letter-spacing:0px;transform:scaleX(0.9434);transform-origin:right center;">720</div>
<div class="t" style="left:504.5px;top:507.1px;font-size:9.96px;font-weight:400;color:#3c4043;letter-spacing:0px;transform:scaleX(0.9434);transform-origin:left center;">Medium</div>
<div class="a" style="left:722.1px;top:516.0px;width:6.4px;height:1.3px;background:#a3a3a3"></div>
<div class="t" style="right:352.70000000000005px;top:507.1px;font-size:9.86px;font-weight:400;color:#3c4043;letter-spacing:0px;transform:scaleX(0.9434);transform-origin:right center;">$7.97</div>
<div class="t" style="right:233.29999999999995px;top:507.1px;font-size:9.86px;font-weight:400;color:#3c4043;letter-spacing:0px;transform:scaleX(0.9434);transform-origin:right center;">$16.61</div>
<svg class="a" style="left:428px;top:500px" width="66" height="35" viewBox="0 0 66 35"><polygon points="1.20,26.60 1.20,19.00 6.84,19.00 12.47,19.00 18.11,26.30 23.75,19.00 29.38,19.00 35.02,9.80 40.65,9.80 46.29,18.40 51.93,26.30 57.56,19.00 63.20,19.00 63.20,26.60" fill="#e8effd"/><polyline points="1.20,19.00 6.84,19.00 12.47,19.00 18.11,26.30 23.75,19.00 29.38,19.00 35.02,9.80 40.65,9.80 46.29,18.40 51.93,26.30 57.56,19.00 63.20,19.00" fill="none" stroke="#4285f4" stroke-width="1.7" stroke-linejoin="miter" stroke-miterlimit="2"/></svg>
<div class="a" style="left:332px;top:534px;width:1px;height:31px;background:#efeff1"></div>
<div class="a" style="left:497px;top:534px;width:1px;height:31px;background:#efeff1"></div>
<div class="a" style="left:616px;top:534px;width:1px;height:31px;background:#efeff1"></div>
<div class="a" style="left:735px;top:534px;width:1px;height:31px;background:#efeff1"></div>
<div class="a" style="left:854px;top:534px;width:1px;height:31px;background:#efeff1"></div>
<div class="a" style="left:973px;top:534px;width:1px;height:31px;background:#efeff1"></div>
<div class="a" style="left:111px;top:565px;width:1083px;height:1px;background:#e2e4e7"></div>
<div class="cb" style="left:127px;top:543.5px"></div>
<div class="t" style="left:155.7px;top:539.1px;font-size:9.96px;font-weight:400;color:#3c4043;letter-spacing:0px;transform:scaleX(0.9434);transform-origin:left center;">power map excel</div>
<div class="t" style="right:778px;top:539.1px;font-size:9.86px;font-weight:400;color:#3c4043;letter-spacing:0px;transform:scaleX(0.9434);transform-origin:right center;">880</div>
<div class="t" style="left:504.5px;top:539.1px;font-size:9.96px;font-weight:400;color:#3c4043;letter-spacing:0px;transform:scaleX(0.9434);transform-origin:left center;">Low</div>
<div class="a" style="left:722.1px;top:548.0px;width:6.4px;height:1.3px;background:#505050"></div>
<div class="t" style="right:352.70000000000005px;top:539.1px;font-size:9.86px;font-weight:400;color:#3c4043;letter-spacing:0px;transform:scaleX(0.9434);transform-origin:right center;">$1.41</div>
<div class="t" style="right:233.29999999999995px;top:539.1px;font-size:9.86px;font-weight:400;color:#3c4043;letter-spacing:0px;transform:scaleX(0.9434);transform-origin:right center;">$2.46</div>
<svg class="a" style="left:428px;top:532px" width="66" height="35" viewBox="0 0 66 35"><polygon points="1.20,26.60 1.20,16.40 6.84,9.50 12.47,16.40 18.11,25.80 23.75,16.80 29.38,16.80 35.02,9.50 40.65,16.80 46.29,16.80 51.93,16.80 57.56,16.80 63.20,25.00 63.20,26.60" fill="#e8effd"/><polyline points="1.20,16.40 6.84,9.50 12.47,16.40 18.11,25.80 23.75,16.80 29.38,16.80 35.02,9.50 40.65,16.80 46.29,16.80 51.93,16.80 57.56,16.80 63.20,25.00" fill="none" stroke="#4285f4" stroke-width="1.7" stroke-linejoin="miter" stroke-miterlimit="2"/></svg>
<div class="a" style="left:332px;top:566px;width:1px;height:31px;background:#efeff1"></div>
<div class="a" style="left:497px;top:566px;width:1px;height:31px;background:#efeff1"></div>
<div class="a" style="left:616px;top:566px;width:1px;height:31px;background:#efeff1"></div>
<div class="a" style="left:735px;top:566px;width:1px;height:31px;background:#efeff1"></div>
<div class="a" style="left:854px;top:566px;width:1px;height:31px;background:#efeff1"></div>
<div class="a" style="left:973px;top:566px;width:1px;height:31px;background:#efeff1"></div>
<div class="a" style="left:111px;top:597px;width:1083px;height:1px;background:#e2e4e7"></div>
<div class="cb" style="left:127px;top:575.5px"></div>
<div class="t" style="left:155.7px;top:571.1px;font-size:9.96px;font-weight:400;color:#3c4043;letter-spacing:0px;transform:scaleX(0.9434);transform-origin:left center;">data visualization in r</div>
<div class="t" style="right:778px;top:571.1px;font-size:9.86px;font-weight:400;color:#3c4043;letter-spacing:0px;transform:scaleX(0.9434);transform-origin:right center;">880</div>
<div class="t" style="left:504.5px;top:571.1px;font-size:9.96px;font-weight:400;color:#3c4043;letter-spacing:0px;transform:scaleX(0.9434);transform-origin:left center;">Medium</div>
<div class="a" style="left:722.1px;top:580.0px;width:6.4px;height:1.3px;background:#505050"></div>
<div class="t" style="right:352.70000000000005px;top:571.1px;font-size:9.86px;font-weight:400;color:#3c4043;letter-spacing:0px;transform:scaleX(0.9434);transform-origin:right center;">$3.88</div>
<div class="t" style="right:233.29999999999995px;top:571.1px;font-size:9.86px;font-weight:400;color:#3c4043;letter-spacing:0px;transform:scaleX(0.9434);transform-origin:right center;">$10.26</div>
<svg class="a" style="left:428px;top:564px" width="66" height="35" viewBox="0 0 66 35"><polygon points="1.20,26.60 1.20,25.40 6.84,16.40 12.47,16.40 18.11,25.40 23.75,16.40 29.38,16.40 35.02,9.70 40.65,9.70 46.29,16.40 51.93,16.40 57.56,25.40 63.20,16.40 63.20,26.60" fill="#e8effd"/><polyline points="1.20,25.40 6.84,16.40 12.47,16.40 18.11,25.40 23.75,16.40 29.38,16.40 35.02,9.70 40.65,9.70 46.29,16.40 51.93,16.40 57.56,25.40 63.20,16.40" fill="none" stroke="#4285f4" stroke-width="1.7" stroke-linejoin="miter" stroke-miterlimit="2"/></svg></body></html>
